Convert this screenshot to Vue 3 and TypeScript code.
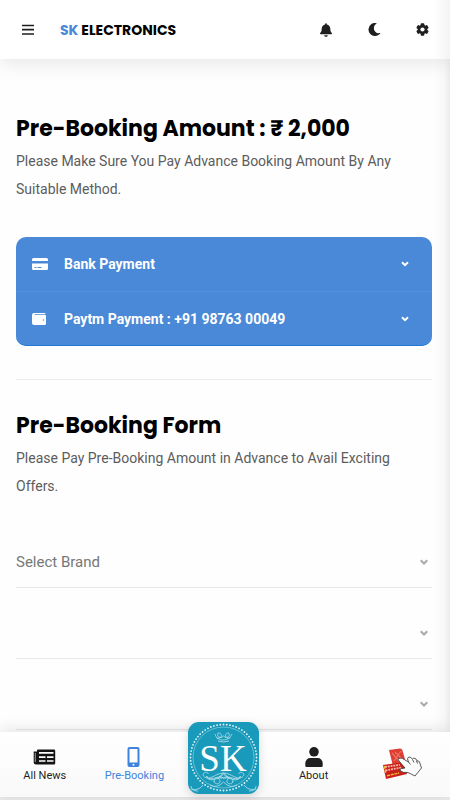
<script setup lang="ts">
import { ref } from 'vue'

type Payment = { label: string; icon: 'card' | 'wallet' }
type Field = { id: string; label: string; options: string[] }

const payments: Payment[] = [
  { label: 'Bank Payment', icon: 'card' },
  { label: 'Paytm Payment : +91 98763 00049', icon: 'wallet' },
]

const fields: Field[] = [
  { id: 'brand', label: 'Brand', options: ['Select Brand'] },
  { id: 'model', label: 'Model', options: [''] },
  { id: 'variant', label: 'Variant', options: [''] },
]

const values = ref<Record<string, string>>({ brand: 'Select Brand', model: '', variant: '' })

// Dots of the ring around the monogram
const dots = Array.from({ length: 64 }, (_, i) => {
  const a = (i / 64) * Math.PI * 2
  return { x: 35.5 + 33 * Math.cos(a), y: 35.5 + 33 * Math.sin(a) }
})
</script>

<template>
  <div class="app">
    <header class="topbar">
      <button class="icon-btn menu" aria-label="Menu">
        <svg width="12" height="12" viewBox="0 0 12 12"><path d="M0 1.500h12M0 5.700h12M0 10h12" stroke="#1f1f1f" stroke-width="1.700" /></svg>
      </button>
      <a href="#" class="brand"><span>SK</span> ELECTRONICS</a>
      <div class="actions">
        <button class="icon-btn" aria-label="Notifications">
          <svg width="12" height="14" viewBox="0 0 448 512" fill="#1f1f1f"><path d="M224 512c35 0 64-29 64-64H160c0 35 29 64 64 64zm215-149c-19-21-55-52-55-154 0-78-54-140-128-155V32a32 32 0 1 0-64 0v22C118 69 64 131 64 209c0 102-36 133-55 154-6 6-9 14-9 21 0 16 13 32 32 32h384c19 0 32-16 32-32 0-7-3-15-9-21z" /></svg>
        </button>
        <button class="icon-btn" aria-label="Dark mode">
          <svg width="13" height="13" viewBox="0 0 512 512" fill="#1f1f1f"><path d="M283 512c79 0 151-36 199-94 7-9-1-22-12-20-124 24-238-71-238-196 0-72 38-138 101-174 10-5 7-20-4-22A256 256 0 1 0 283 512z" /></svg>
        </button>
        <button class="icon-btn" aria-label="Settings">
          <svg width="13" height="13" viewBox="0 0 24 24">
            <g fill="#1f1f1f">
              <rect v-for="r in [0, 60, 120]" :key="r" x="8.6" y="0.5" width="6.8" height="23" rx="1.6" :transform="`rotate(${r} 12 12)`" />
              <circle cx="12" cy="12" r="8.8" />
            </g>
            <circle cx="12" cy="12" r="3.9" fill="#fff" />
          </svg>
        </button>
      </div>
    </header>

    <main class="content">
      <section>
        <h2>Pre-Booking Amount : ₹ 2,000</h2>
        <p>Please Make Sure You Pay Advance Booking Amount By Any Suitable Method.</p>
        <div class="payments">
          <button v-for="p in payments" :key="p.label" class="payment">
            <svg v-if="p.icon === 'card'" width="16" height="14" viewBox="0 0 16 14">
              <path d="M1.500 1h13A1.500 1.500 0 0 1 16 2.500V4H0V2.500A1.500 1.500 0 0 1 1.500 1zM0 6.500h16v5a1.500 1.500 0 0 1-1.500 1.500h-13A1.500 1.500 0 0 1 0 11.500z" fill="#fff" />
              <path d="M2.500 10.500h2M5.500 10.500h4" stroke="#4a89d8" />
            </svg>
            <svg v-else width="16" height="14" viewBox="0 0 16 14">
              <path d="M2 1h10.500q1 0 1 1H2.500v.8H12.500q1.500 0 1.500 1.200v7.500a1.500 1.500 0 0 1-1.500 1.500H2a2 2 0 0 1-2-2V3a2 2 0 0 1 2-2z" fill="#fff" />
              <circle cx="11.500" cy="8" r=".7" fill="#4a89d8" />
            </svg>
            <span>{{ p.label }}</span>
            <svg class="chevron" width="8" height="6" viewBox="0 0 8 6"><path d="M1 1.200l3 3 3-3" fill="none" stroke="#fff" stroke-width="2" /></svg>
          </button>
        </div>
      </section>

      <hr />

      <section>
        <h2>Pre-Booking Form</h2>
        <p>Please Pay Pre-Booking Amount in Advance to Avail Exciting Offers.</p>
        <form class="form">
          <label v-for="f in fields" :key="f.id" class="field" :for="f.id">
            <select :id="f.id" v-model="values[f.id]" :aria-label="f.label">
              <option v-for="o in f.options" :key="o" :value="o">{{ o }}</option>
            </select>
            <svg width="8" height="6" viewBox="0 0 8 6"><path d="M.7 1.200L4 4.500l3.300-3.300" fill="none" stroke="#aaa" stroke-width="2" /></svg>
          </label>
        </form>
      </section>
    </main>

    <nav class="tabs">
      <a href="#" class="tab">
        <svg width="23" height="20" viewBox="0 0 23 20">
          <path d="M5 2.500h16a1.200 1.200 0 0 1 1.200 1.200v12.600a1.200 1.200 0 0 1-1.200 1.200H3a2.300 2.300 0 0 1-2.300-2.300V4.500H4V3.500a1 1 0 0 1 1-1z" fill="#141414" />
          <path d="M2.300 6v9" stroke="#888" stroke-width="1.200" />
          <path d="M6 5.800h14.500M6 10.200h6.500M14 10.200h6.500M6 14h6.500M14 14h6.500" stroke="#fff" stroke-width="1.700" />
        </svg>
        <span>All News</span>
      </a>
      <a href="#" class="tab active">
        <svg width="14" height="20" viewBox="0 0 14 20">
          <path fill-rule="evenodd" d="M2.500 0h8A2 2 0 0 1 12.500 2v16a2 2 0 0 1-2 2h-8a2 2 0 0 1-2-2V2a2 2 0 0 1 2-2zM2.500 2v13.500h8V2zM6.500 16.700a1 1 0 1 0 0 2 1 1 0 0 0 0-2z" fill="#3f84dc" />
        </svg>
        <span>Pre-Booking</span>
      </a>
      <a href="#" class="tab home" aria-label="Home">
        <svg class="logo" width="71" height="72" viewBox="0 0 71 72">
          <circle v-for="(d, i) in dots" :key="i" :cx="d.x" :cy="d.y" r="0.9" fill="#e6f6f9" />
          <g fill="none" stroke="#b9e3ec" stroke-width=".8">
            <circle cx="35.500" cy="35.500" r="30.500" stroke="#7cc6d7" />
            <path d="M35.500 14c-5 5-8-4-4-3 3 1 3 6-3 5M35.500 14c5 5 8-4 4-3-3 1-3 6 3 5M27 12c2 8 14 8 17 0M30 19q5.500 2 11 0" />
            <path d="M35.500 51c-8 0-13 8-19 4-4-3 2-7 4-3M35.500 51c8 0 13 8 19 4 4-3-2-7-4-3M35.500 52c-4 5-16 9-17 2 3 7 12-2 17 2 5-4 14 5 17-2-1 7-13 3-17-2M30 56l5.500-5 5.500 5zM26 60c0-6 7-4 6 0-1 3-6 2-6-1M45 60c0-6-7-4-6 0 1 3 6 2 6-1M22 63q7 4 13.500-3Q42 67 49 63M3 67q8 2 12-4M68 67q-8 2-12-4M3 64q0 5 7 5M68 64q0 5-7 5" />
          </g>
          <text x="35" y="49" text-anchor="middle" class="monogram">SK</text>
        </svg>
      </a>
      <a href="#" class="tab">
        <svg width="18" height="20" viewBox="0 0 18 20" fill="#1f1f1f"><circle cx="9" cy="4.800" r="4.800" /><path d="M5.500 11h7A5 5 0 0 1 17.700 16v2.300A1.500 1.500 0 0 1 16.200 20H1.800A1.500 1.500 0 0 1 .3 18.300V16A5 5 0 0 1 5.500 11z" /></svg>
        <span>About</span>
      </a>
      <a href="#" class="tab" aria-label="Offers">
        <svg width="42" height="34" viewBox="0 0 42 34">
          <path d="M7 3l11-1.500q2 0 2.500 2L24 16l-13 3z" fill="#df3d31" />
          <path d="M10 6l8 9M13 5l8 8M19 4l-7 10" stroke="#ec7268" stroke-width="1.300" />
          <path d="M1 18l21-3 3 12-21 5z" fill="#c9201c" />
          <path d="M3 20l15-2.200M3.500 23.500l16-3" stroke="#f5b2a0" stroke-width="1.800" stroke-dasharray="2 .8" />
          <path d="M2.500 19l1.300 7M5 28.800l12-2.800" stroke="#f0c230" stroke-width="1.400" stroke-dasharray="3 .8" />
          <path d="M17.500 11.500q1.500-1 3 0l6 3.500-1-3q0-2 2.500-2l2.500 2q1-2 3.500 0l1 2q2-.5 2.500 1l2 6-6.500 8-7-3.500q-5 .5-7.500-1.500-1.500-2 1-2.500l3.500-.5-6-7q-1.500-1.500 0-3z" fill="#fbfbfb" stroke="#333" stroke-width=".8" />
          <path d="M26.500 15l2 2.500M30.500 12.500l1.500 3M34.500 14l1 2.500" fill="none" stroke="#333" stroke-width=".8" />
        </svg>
      </a>
    </nav>
  </div>
</template>

<style>
body {
  margin: 0;
  background: #fefefe;
}
</style>

<style scoped>
* {
  box-sizing: border-box;
}

.app {
  display: flex;
  flex-direction: column;
  height: 100vh;
  border-bottom: 3px solid #e9e9e9;
  font-family: Roboto, sans-serif;
  color: #1f1f1f;
}

button {
  border: 0;
  background: none;
  font: inherit;
  cursor: pointer;
}

a {
  color: inherit;
  text-decoration: none;
}

.topbar {
  display: flex;
  flex: none;
  align-items: center;
  height: 59px;
  padding: 0 16px;
  background: linear-gradient(to left, #f4f4f4, #fff 16px);
  box-shadow: 0 4px 20px rgba(0, 0, 0, 0.1);
  z-index: 1;
}

.icon-btn {
  display: flex;
  align-items: center;
  justify-content: center;
  width: 24px;
  height: 24px;
  padding: 0;
}

.brand {
  margin-left: 20px;
  font-family: Poppins, Inter, sans-serif;
  font-size: 14px;
  line-height: 20px;
  font-weight: 700;
  color: #000;
}

.brand span {
  color: #4a89d8;
}

.actions {
  display: flex;
  gap: 24px;
  margin-left: auto;
}

.content {
  flex: 1;
  min-height: 0;
  overflow-y: auto;
  scrollbar-width: none;
  padding: 51px 18px 0 16px;
  background: linear-gradient(to left, #ebebeb, #f8f8f8 6px, #fefefe 16px);
}

h2 {
  margin: 0;
  font-family: Poppins, Inter, sans-serif;
  font-size: 22px;
  line-height: 37px;
  font-weight: 700;
  color: #000;
}

p {
  margin: 0;
  font-size: 14px;
  line-height: 28px;
  color: #5c5c5c;
}

.payments {
  margin-top: 34px;
  overflow: hidden;
  border-radius: 10px;
  border-bottom: 1px solid #1f7ad8;
  background: #4a89d8;
}

.payment {
  display: flex;
  align-items: center;
  width: 100%;
  height: 54px;
  padding: 0 23px 0 16px;
  color: #fff;
  font-size: 14px;
  font-weight: 700;
  text-align: left;
}

.payment + .payment {
  border-top: 1px solid #568fdb;
}

.payment span {
  margin-left: 16px;
}

.chevron {
  margin-left: auto;
}

hr {
  height: 1px;
  margin: 33px 0 27px;
  border: 0;
  background: #ebebeb;
}

.form {
  display: grid;
  gap: 19px;
  margin-top: 36px;
}

.field {
  display: flex;
  align-items: center;
  height: 52px;
  padding-right: 4px;
  border-bottom: 1px solid #e8e8e8;
}

select {
  flex: 1;
  height: 100%;
  padding: 0;
  border: 0;
  outline: 0;
  appearance: none;
  background: none;
  font-family: inherit;
  font-size: 15px;
  color: #777;
}

.tabs {
  display: grid;
  grid-template-columns: repeat(5, 1fr);
  flex: none;
  height: 65px;
  padding-right: 2px;
  background: linear-gradient(#fff, #f9f9f9);
  box-shadow: 0 -3px 14px rgba(0, 0, 0, 0.1);
  z-index: 1;
}

.tab {
  display: flex;
  flex-direction: column;
  align-items: center;
  padding-top: 15px;
  font-size: 11px;
  line-height: 18px;
}

.tab.active {
  color: #3f84dc;
}

.tab.home {
  padding: 0;
}

.logo {
  margin-top: -10px;
  border-radius: 11px;
  background: #1a9aba;
  box-shadow: 0 3px 10px rgba(0, 0, 0, 0.15);
}

.monogram {
  font-family: "Liberation Serif", serif;
  font-size: 37px;
  fill: #fff;
}
</style>
